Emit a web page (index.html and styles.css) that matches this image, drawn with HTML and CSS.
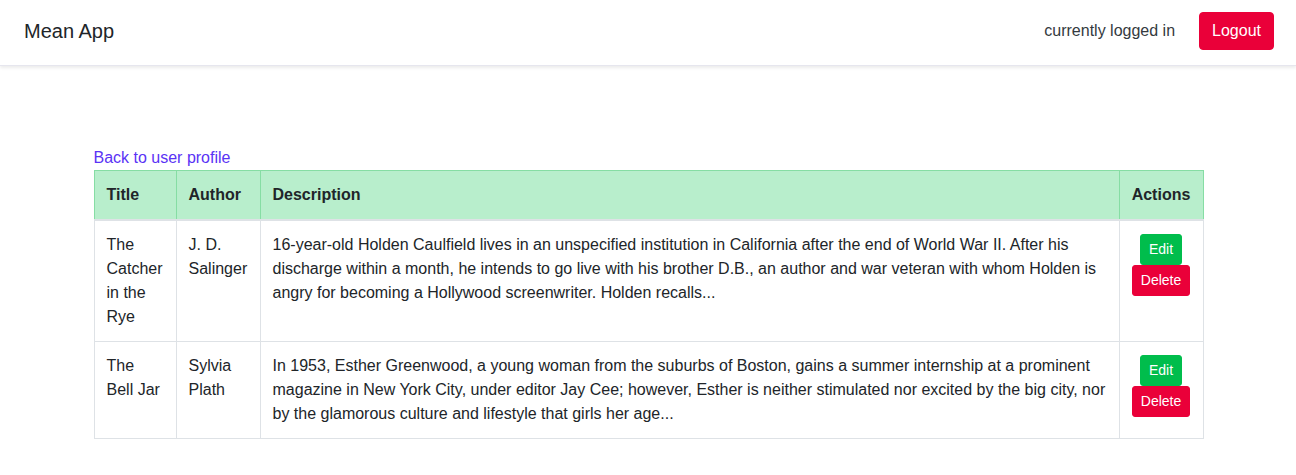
FILE: index.html
```html
<!DOCTYPE html>
<html>
<head>
<meta charset="utf-8">
<link rel="stylesheet" href="styles.css">
</head>
<body>
<nav class="navbar">
  <span class="brand">Mean App</span>
  <div class="nav-right">
    <span class="status">currently logged in</span>
    <button class="btn btn-logout">Logout</button>
  </div>
</nav>
<main class="container">
  <a class="back" href="#">Back to user profile</a>
  <table class="books">
    <colgroup>
      <col class="c-title"><col class="c-author"><col class="c-desc"><col class="c-actions">
    </colgroup>
    <thead>
      <tr><th>Title</th><th>Author</th><th>Description</th><th class="center">Actions</th></tr>
    </thead>
    <tbody>
      <tr>
        <td>The Catcher in the Rye</td>
        <td>J. D. Salinger</td>
        <td>16-year-old Holden Caulfield lives in an unspecified institution in California after the end of World War II. After his discharge within a month, he intends to go live with his brother D.B., an author and war veteran with whom Holden is angry for becoming a Hollywood screenwriter. Holden recalls...</td>
        <td class="actions"><div class="stack"><button class="btn btn-sm btn-edit">Edit</button><button class="btn btn-sm btn-delete">Delete</button></div></td>
      </tr>
      <tr>
        <td>The Bell Jar</td>
        <td>Sylvia Plath</td>
        <td>In 1953, Esther Greenwood, a young woman from the suburbs of Boston, gains a summer internship at a prominent magazine in New York City, under editor Jay Cee; however, Esther is neither stimulated nor excited by the big city, nor by the glamorous culture and lifestyle that girls her age...</td>
        <td class="actions"><div class="stack"><button class="btn btn-sm btn-edit">Edit</button><button class="btn btn-sm btn-delete">Delete</button></div></td>
      </tr>
    </tbody>
  </table>
</main>
</body>
</html>
```
FILE: styles.css
```css
* { box-sizing: border-box; }
body {
  margin: 0;
  font-family: "Liberation Sans", Arial, sans-serif;
  font-size: 16px;
  line-height: 24px;
  color: #212529;
  background: #fff;
}
.navbar {
  display: flex;
  align-items: center;
  justify-content: space-between;
  height: 66px;
  padding: 0 22px 3px 24px;
  background: #fff;
  box-shadow: 0 2px 3px rgba(0,0,0,0.08);
  border-bottom: 1px solid #e6e6ee;
}
.brand {
  font-size: 20px;
  line-height: 30px;
  color: #212529;
}
.nav-right {
  display: flex;
  align-items: center;
  gap: 24px;
}
.status { color: #343a40; }
.btn {
  font-family: inherit;
  color: #fff;
  cursor: pointer;
}
.btn-logout {
  background: #ea0039;
  border: 1px solid #ea0039;
  font-size: 16px;
  line-height: 24px;
  padding: 6px 12px;
  border-radius: 4px;
}
.container {
  width: 1111px;
  margin: 0 auto;
  padding-top: 80px;
  padding-left: 1px;
}
.back {
  color: #5a33f5;
  text-decoration: none;
  display: block;
  line-height: 24px;
}
.books {
  width: 1110px;
  border-collapse: collapse;
  table-layout: fixed;
}
.c-title { width: 82px; }
.c-author { width: 84px; }
.c-actions { width: 84px; }
.books th, .books td {
  border: 1px solid #dee2e6;
  padding: 12px;
  vertical-align: top;
  text-align: left;
}
.books thead th {
  background: #b8eecc;
  border-color: #86dda4;
  border-bottom: 2px solid #dee2e6;
  font-weight: bold;
}
.books th.center { text-align: center; }
.actions { text-align: center; }
.stack {
  display: flex;
  flex-direction: column;
  align-items: center;
  padding-top: 1px;
}
.btn-sm {
  font-size: 14px;
  line-height: 21px;
  padding: 4px 8px;
  border-radius: 3px;
}
.btn-edit { background: #00bd4c; border: 1px solid #00bd4c; }
.btn-delete { background: #ea0039; border: 1px solid #ea0039; }
```
